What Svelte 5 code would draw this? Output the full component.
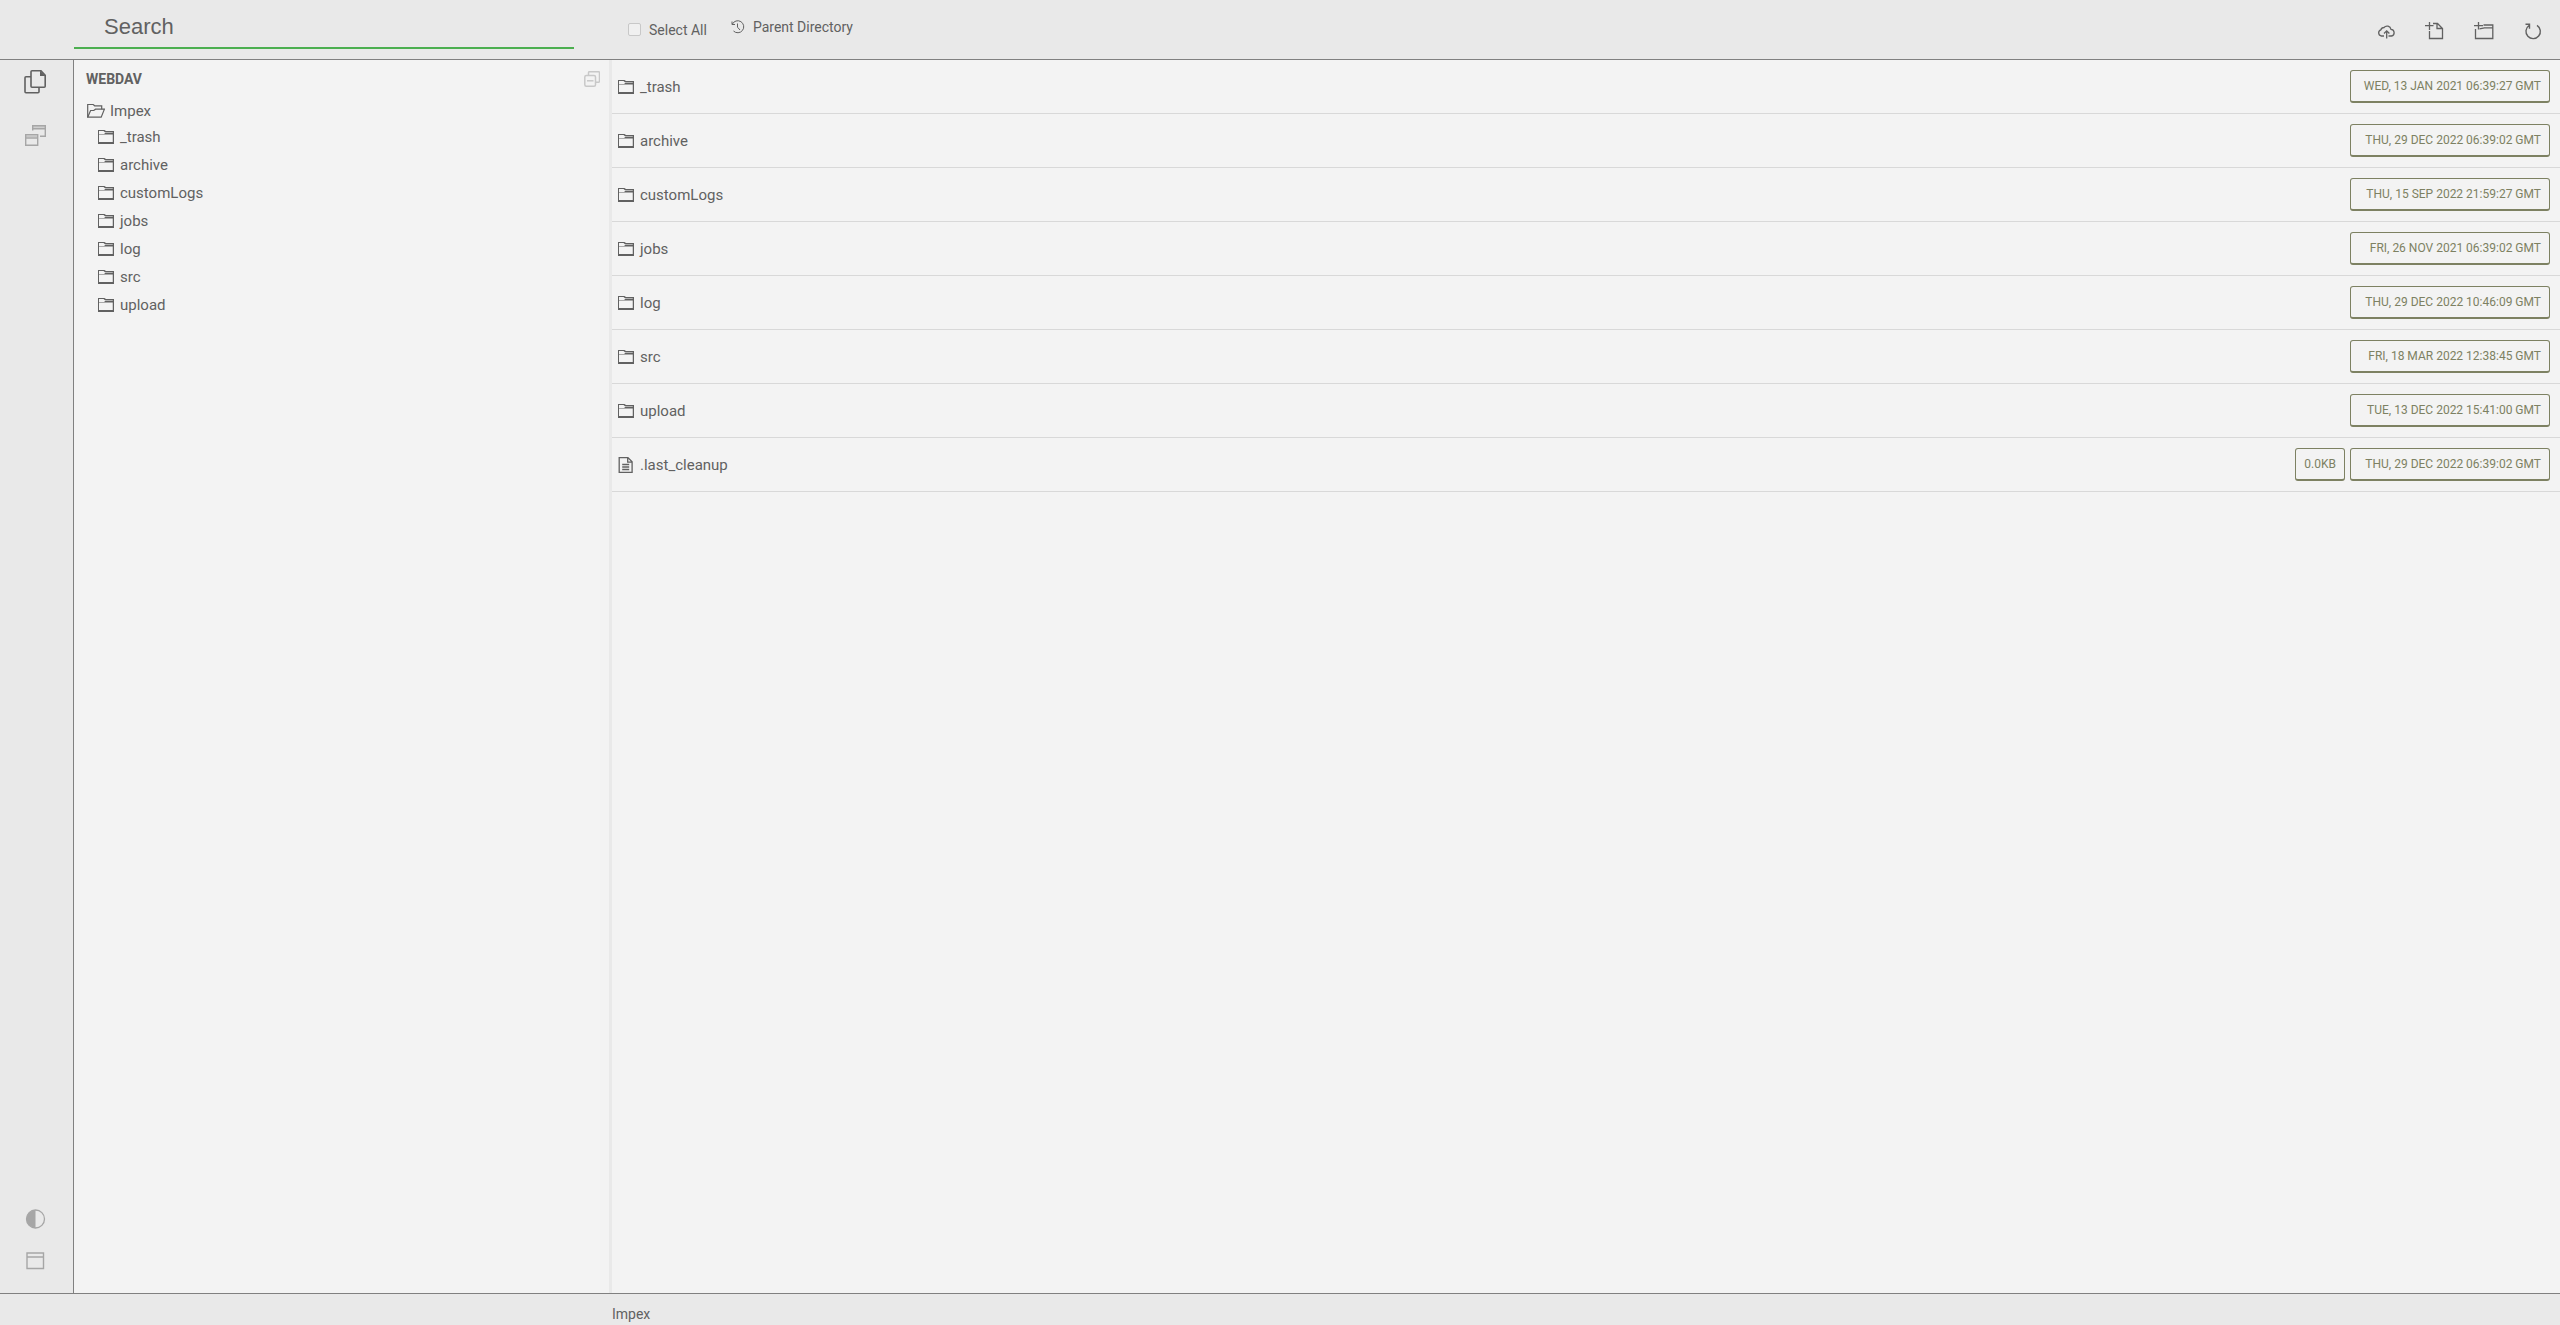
<script lang="ts">
  interface Entry {
    name: string;
    modified: string;
    size?: string;
  }

  const root = 'Impex';

  const entries: Entry[] = [
    { name: '_trash', modified: 'Wed, 13 Jan 2021 06:39:27 GMT' },
    { name: 'archive', modified: 'Thu, 29 Dec 2022 06:39:02 GMT' },
    { name: 'customLogs', modified: 'Thu, 15 Sep 2022 21:59:27 GMT' },
    { name: 'jobs', modified: 'Fri, 26 Nov 2021 06:39:02 GMT' },
    { name: 'log', modified: 'Thu, 29 Dec 2022 10:46:09 GMT' },
    { name: 'src', modified: 'Fri, 18 Mar 2022 12:38:45 GMT' },
    { name: 'upload', modified: 'Tue, 13 Dec 2022 15:41:00 GMT' },
    { name: '.last_cleanup', modified: 'Thu, 29 Dec 2022 06:39:02 GMT', size: '0.0KB' },
  ];

  // Only files carry a size.
  const folders = entries.filter((e) => !e.size);

  let query = $state('');
  let selectAll = $state(false);
</script>

{#snippet folderIcon()}
  <svg class="icon" width="16" height="16" viewBox="0 0 16 16" aria-hidden="true">
    <path d="M.5 14.5V1.5" stroke="currentColor" />
    <path d="M0 1h6.500L8 2h8v1.300H7L5.500 2H0z" fill="currentColor" />
    <path d="M1 5.500h5" stroke="currentColor" opacity=".5" />
    <path d="M6 5l1.500-1.200H16V5.500H6z" fill="currentColor" />
    <path d="M0 14h16" stroke="currentColor" stroke-width="2" />
    <path d="M15.400 2v12" stroke="currentColor" stroke-width="1.300" />
  </svg>
{/snippet}

<div class="app">
  <header class="topbar">
    <div class="search">
      <input type="text" placeholder="Search" aria-label="Search" bind:value={query} />
    </div>
    <div class="tools">
      <label class="select-all">
        <input type="checkbox" bind:checked={selectAll} />
        Select All
      </label>
      <button class="parent" type="button">
        <svg width="14" height="14" viewBox="0 0 14 14" fill="none" stroke="currentColor" aria-hidden="true">
          <path d="M1.3 4.2A6 6 0 1 1 2.5 11M1 1.5v3h3M6.5 3.5v3.7L9 10" />
        </svg>
        Parent Directory
      </button>
    </div>
    <div class="actions">
      <button type="button" aria-label="Upload">
        <svg width="20" height="20" viewBox="0 0 20 20" fill="none" stroke="currentColor" stroke-width="1.3" aria-hidden="true">
          <path d="M8 15H5.3a3.2 3.2 0 0 1-.4-6.200A3.200 3.200 0 0 1 8 6.500a4 4 0 0 1 7 1.800 3.400 3.400 0 0 1 .5 6.700h-3" />
          <path d="M10.700 17.500V10M8 12.500l2.700-2.700 2.700 2.700" />
        </svg>
      </button>
      <button type="button" aria-label="New File">
        <svg width="20" height="20" viewBox="0 0 20 20" fill="none" stroke="currentColor" stroke-width="1.3" aria-hidden="true">
          <path d="M4.500 10v7.500h13V7.500l-5-5H8M12 2.500v5h5.500" />
          <path d="M4.500 1v8M0 4.700h8.500" />
        </svg>
      </button>
      <button type="button" aria-label="New Folder">
        <svg width="20" height="20" viewBox="0 0 20 20" fill="none" stroke="currentColor" stroke-width="1.3" aria-hidden="true">
          <path d="M1.500 8v9.500h17.300V4H9.500M5.500 7.800l5-1h8" />
          <path d="M4.500 1v7.500M0 4.700h9" />
        </svg>
      </button>
      <button type="button" aria-label="Refresh">
        <svg width="20" height="20" viewBox="0 0 20 20" fill="none" stroke="currentColor" stroke-width="1.4" aria-hidden="true">
          <path d="M6 4.500a7.200 7.200 0 1 0 8-.2M2.500 3.200h4v4.500" />
        </svg>
      </button>
    </div>
  </header>

  <div class="body">
    <nav class="rail" aria-label="Views">
      <button class="active" type="button" aria-label="Explorer">
        <svg width="24" height="26" viewBox="0 0 24 26" fill="none" stroke="currentColor" stroke-width="1.6" aria-hidden="true">
          <path d="M8 1.8h9l4.2 4.5v11a1 1 0 0 1-1 1H8a1 1 0 0 1-1-1V2.8a1 1 0 0 1 1-1z" />
          <path d="M16 1.5V7h5.5z" fill="currentColor" stroke="none" />
          <path d="M7 7.8H2a1 1 0 0 0-1 1v14a1 1 0 0 0 1 1h12a1 1 0 0 0 1-1v-4" />
        </svg>
      </button>
      <button type="button" aria-label="Open Windows">
        <svg width="24" height="26" viewBox="0 0 24 26" fill="none" stroke="currentColor" stroke-width="1.4" aria-hidden="true">
          <path d="M8.7 7.500V2.700h12.600v10.600H16M9 5.700h12" />
          <path d="M1.700 11.700h12v10.600h-12zM2 15h12" />
          <path d="M9 4h12M2 13.500h12" opacity=".5" />
        </svg>
      </button>
      <button class="push" type="button" aria-label="Toggle Theme">
        <svg width="24" height="24" viewBox="0 0 24 24" aria-hidden="true">
          <circle cx="11.5" cy="12" r="9" fill="none" stroke="currentColor" stroke-width="1.3" />
          <path d="M11.5 3a9 9 0 0 0 0 18z" fill="currentColor" />
        </svg>
      </button>
      <button type="button" aria-label="Toggle Panel">
        <svg width="24" height="24" viewBox="0 0 24 24" fill="none" stroke="currentColor" stroke-width="1.4" aria-hidden="true">
          <path d="M3 4h16.500v15.500H3zM3 8h16.500" />
        </svg>
      </button>
    </nav>

    <aside class="sidebar">
      <div class="sidebar-head">
        <h2>WEBDAV</h2>
        <button type="button" aria-label="Collapse All">
          <svg width="16" height="16" viewBox="0 0 16 16" fill="none" stroke="currentColor" stroke-width="1.5" aria-hidden="true">
            <path d="M4.500 4V1.700A1 1 0 0 1 5.500.7h9a1 1 0 0 1 1 1v8.600a1 1 0 0 1-1 1H12" />
            <rect x=".8" y="4.5" width="10.7" height="10.7" rx="1.5" />
            <path d="M3 9.800h6.500" />
          </svg>
        </button>
      </div>
      <a class="root" href="#{root}">
        <svg width="18" height="16" viewBox="0 0 18 16" fill="none" stroke="currentColor" stroke-width="1.2" aria-hidden="true">
          <path d="M.7 14.200V1.500h5.500l1.500 1.300h7v3.400" />
          <path d="M.7 14.200h13.500l3.200-8H8.500L6.800 7.500H3.600z" />
        </svg>
        {root}
      </a>
      <ul class="tree">
        {#each folders as folder (folder.name)}
          <li><a href="#{root}/{folder.name}">{@render folderIcon()}{folder.name}</a></li>
        {/each}
      </ul>
    </aside>

    <main>
      <ul class="files">
        {#each entries as entry (entry.name)}
          <li>
            <a href="#{root}/{entry.name}">
              {#if entry.size}
                <svg class="icon" width="16" height="16" viewBox="0 0 16 16" fill="none" stroke="currentColor" stroke-width="1.3" aria-hidden="true">
                  <path d="M1.200.6h8.700l4.200 4.200v10.600H1.200zM9.700.6v4.600h4.400" />
                  <path d="M4.200 7.500h7M4.200 10h7M4.200 12.500h7" />
                </svg>
              {:else}
                {@render folderIcon()}
              {/if}
              {entry.name}
            </a>
            {#if entry.size}
              <span class="badge">{entry.size}</span>
            {/if}
            <time class="badge date">{entry.modified}</time>
          </li>
        {/each}
      </ul>
    </main>
  </div>

  <footer>{root}</footer>
</div>

<style>
  :global(body) {
    background: #f3f3f3;
  }

  .app {
    display: flex;
    flex-direction: column;
    height: 100vh;
    overflow: hidden;
    color: #616161;
    font-family: Roboto, 'Liberation Sans', sans-serif;
    font-size: 15px;
    line-height: 20px;
  }

  button {
    display: flex;
    align-items: center;
    justify-content: center;
    padding: 0;
    border: 0;
    background: none;
    color: inherit;
    font: inherit;
    cursor: pointer;
  }

  a {
    display: flex;
    align-items: center;
    color: inherit;
    text-decoration: none;
  }

  ul {
    margin: 0;
    padding: 0;
    list-style: none;
  }

  svg {
    flex: none;
  }

  .topbar {
    display: flex;
    align-items: flex-start;
    flex: none;
    box-sizing: border-box;
    height: 60px;
    padding: 0 14px 0 74px;
    border-bottom: 1px solid #808080;
    background: #e9e9e9;
  }

  .search {
    width: 500px;
    margin-right: 54px;
  }

  .search input {
    box-sizing: border-box;
    width: 100%;
    height: 49px;
    padding: 7px 30px 0;
    border: 0;
    border-bottom: 2px solid #4caf50;
    outline: 0;
    background: none;
    color: inherit;
    font-family: 'Liberation Sans', Arial, sans-serif;
    font-size: 22px;
  }

  .search input::placeholder {
    color: #616161;
    opacity: 1;
  }

  .tools {
    display: flex;
    align-items: flex-start;
    gap: 24px;
    font-size: 14px;
  }

  .select-all {
    display: flex;
    align-items: center;
    gap: 8px;
    margin-top: 20px;
  }

  .select-all input {
    appearance: none;
    box-sizing: border-box;
    width: 13px;
    height: 13px;
    margin: 0 0 2px;
    border: 1px solid #c8c8c8;
    border-radius: 2px;
    background: #f0f0f0;
  }

  .select-all input:checked {
    background: #4caf50;
  }

  .parent {
    gap: 8px;
    margin-top: 17px;
  }

  .actions {
    display: flex;
    gap: 23px;
    margin: 18px 0 0 auto;
  }

  .actions button {
    width: 26px;
    height: 26px;
  }

  .body {
    display: flex;
    flex: 1;
    min-height: 0;
  }

  .rail {
    display: flex;
    flex-direction: column;
    gap: 28px;
    box-sizing: border-box;
    width: 74px;
    padding: 9px 0 20px;
    border-right: 1px solid #808080;
    background: #e9e9e9;
    color: #a6a6a6;
  }

  .rail button {
    padding-right: 2px;
  }

  .rail .active {
    color: #616161;
  }

  .rail .push {
    margin-top: auto;
    margin-bottom: -10px;
  }

  .sidebar {
    width: 535px;
    border-right: 3px solid #e9e9e9;
  }

  .sidebar-head {
    display: flex;
    align-items: center;
    justify-content: space-between;
    padding: 9px 9px 11px 12px;
  }

  .sidebar-head button {
    color: #c8c8c8;
  }

  h2 {
    margin: 0;
    font-size: 14px;
    font-weight: 700;
  }

  .root {
    gap: 5px;
    height: 22px;
    padding-left: 13px;
  }

  .tree {
    padding: 1px 0 0 24px;
  }

  .tree a {
    height: 28px;
  }

  .icon {
    margin-right: 6px;
  }

  main {
    flex: 1;
    overflow: auto;
  }

  .files li {
    display: flex;
    align-items: center;
    gap: 5px;
    box-sizing: border-box;
    height: 54px;
    padding-right: 10px;
    border-bottom: 1px solid #d8d8d8;
  }

  .files a {
    flex: 1;
    padding-left: 6px;
  }

  .badge {
    box-sizing: border-box;
    height: 33px;
    padding: 5px 8px;
    border: 1px solid #7d8162;
    border-bottom-width: 2px;
    border-radius: 3px;
    color: #7d8162;
    font-size: 12px;
    text-align: right;
    text-transform: uppercase;
  }

  .date {
    width: 200px;
  }

  footer {
    flex: none;
    box-sizing: border-box;
    height: 32px;
    padding: 10px 0 0 612px;
    border-top: 1px solid #808080;
    background: #e9e9e9;
    font-size: 14px;
  }
</style>
